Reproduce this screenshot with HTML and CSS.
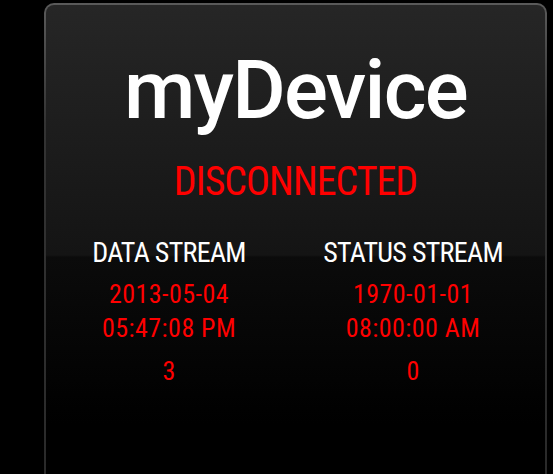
FILE: index.html
```html
<!DOCTYPE html>
<html>
<head>
<meta charset="utf-8">
<link rel="stylesheet" href="styles.css">
</head>
<body>
<div class="card">
  <div class="title">myDevice</div>
  <div class="status">DISCONNECTED</div>
  <div class="streams">
    <div class="stream">
      <div class="label">DATA STREAM</div>
      <div class="when">2013-05-04<br>05:47:08 PM</div>
      <div class="count">3</div>
    </div>
    <div class="stream">
      <div class="label">STATUS STREAM</div>
      <div class="when">1970-01-01<br>08:00:00 AM</div>
      <div class="count">0</div>
    </div>
  </div>
</div>
</body>
</html>
```
FILE: styles.css
```css
html, body {
  margin: 0;
  padding: 0;
  background: #000;
  overflow: hidden;
  height: 474px;
}
body {
  font-family: "Roboto Condensed", Roboto, sans-serif;
}
.card {
  margin: 3px 0 0 44px;
  width: 499px;
  height: 426px;
  border: 2px solid transparent;
  border-bottom: 0;
  border-radius: 10px 10px 0 0;
  background:
    linear-gradient(to bottom, #262626 0, #141414 250px, #0b0b0b 252px, #000 420px) padding-box,
    linear-gradient(to bottom, #5a5a5a 0, #333 120px, #2a2a2a 470px) border-box;
  padding-top: 44px;
}
.title {
  font-family: Roboto, sans-serif;
  font-weight: 500;
  text-align: center;
  color: #fff;
  font-size: 82px;
  line-height: 82px;
  letter-spacing: -1.75px;
}
.status {
  text-align: center;
  color: #ff0000;
  font-size: 40px;
  line-height: 40px;
  letter-spacing: -1px;
  margin-top: 31px;
}
.streams {
  display: grid;
  grid-template-columns: 244px 244px;
  margin: 37px 0 0 1px;
}
.stream {
  text-align: center;
}
.label {
  color: #fff;
  font-size: 28px;
  line-height: 28px;
  letter-spacing: -0.7px;
}
.when {
  color: #ff0000;
  font-size: 26px;
  line-height: 34px;
  letter-spacing: 0.45px;
  margin-top: 10px;
}
.count {
  color: #ff0000;
  font-size: 26px;
  line-height: 34px;
  margin-top: 9px;
}
```
